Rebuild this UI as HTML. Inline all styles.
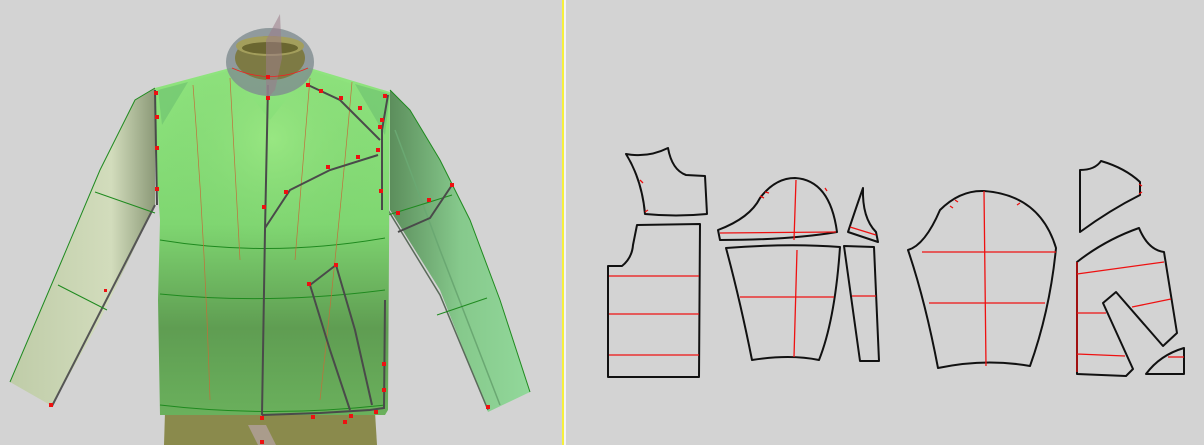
<!DOCTYPE html>
<html><head><style>
html,body{margin:0;padding:0;width:1204px;height:445px;overflow:hidden;background:#d3d3d3}
svg{display:block}
</style></head><body>
<svg width="1204" height="445" viewBox="0 0 1204 445" xmlns="http://www.w3.org/2000/svg">
<defs>
<linearGradient id="body" x1="0" y1="0" x2="0" y2="1">
<stop offset="0" stop-color="#8fe47e"/><stop offset="0.45" stop-color="#7fd671"/><stop offset="0.75" stop-color="#5f9d52"/><stop offset="1" stop-color="#6ab05c"/>
</linearGradient>
<radialGradient id="chest" cx="0.5" cy="0.3" r="0.5">
<stop offset="0" stop-color="#9ae883" stop-opacity="0.9"/><stop offset="1" stop-color="#7ed070" stop-opacity="0"/>
</radialGradient>
<linearGradient id="lsl" x1="0" y1="0" x2="1" y2="0">
<stop offset="0" stop-color="#bfcca8"/><stop offset="0.7" stop-color="#d2dcbc"/><stop offset="1" stop-color="#8c9a78"/>
</linearGradient>
<linearGradient id="rsl" x1="0" y1="0" x2="1" y2="0">
<stop offset="0" stop-color="#5c8e5c"/><stop offset="0.5" stop-color="#86c98c"/><stop offset="1" stop-color="#92d89a"/>
</linearGradient>
</defs>
<rect x="0" y="0" width="562" height="445" fill="#d3d3d3"/>
<!-- pants -->
<path d="M165 412 L375 412 L377 445 L164 445 Z" fill="#8a8a4c"/>
<path d="M248 425 L258 445 L276 445 L266 425 Z" fill="#b8a4a8" opacity="0.7"/>
<!-- left sleeve -->
<path d="M155 88 L135 100 L100 170 L62 260 L10 382 L52 406 L100 320 L155 205 Z" fill="url(#lsl)"/>
<path d="M155 88 L135 100 L100 170 L62 260 L10 382" fill="none" stroke="#1f8a1f" stroke-width="1"/>
<path d="M155 205 L52 406" fill="none" stroke="#555" stroke-width="2"/>
<path d="M95 192 L155 213 M58 285 L107 310" fill="none" stroke="#1f8a1f" stroke-width="1"/>
<!-- right sleeve -->
<path d="M390 90 L410 110 L440 160 L470 220 L500 300 L530 392 L488 412 L440 290 L390 210 Z" fill="url(#rsl)"/>
<path d="M390 90 L410 110 L440 160 L470 220 L500 300 L530 392" fill="none" stroke="#1f8a1f" stroke-width="1"/>
<path d="M388 210 L440 295 L488 410" fill="none" stroke="#5a6a5a" stroke-width="1.5"/>
<path d="M395 130 L440 250 L500 405" fill="none" stroke="#6aa872" stroke-width="1.5"/>
<path d="M388 215 L452 195 M437 315 L487 298" fill="none" stroke="#1f8a1f" stroke-width="1"/>
<!-- body -->
<path d="M155 88 L230 68 L310 68 L390 92 L388 410 L385 415 L160 415 L158 300 L160 220 L155 150 Z" fill="url(#body)"/>
<path d="M160 90 L230 70 L270 120 L310 70 L385 95 L385 300 L270 250 L160 300 Z" fill="url(#chest)"/>
<path d="M158 90 L188 82 L162 125 Z" fill="#6cc070" opacity="0.6"/>
<path d="M390 94 L355 84 L385 135 Z" fill="#6cc070" opacity="0.6"/>
<path d="M160 240 Q270 258 385 238 M160 294 Q270 305 385 290 M160 405 Q270 418 385 405" fill="none" stroke="#1f8a1f" stroke-width="1"/>
<path d="M193 85 Q205 240 210 400 M230 78 L240 260 M352 82 Q340 220 320 400 M310 78 L295 260" fill="none" stroke="#c0703a" stroke-width="0.7"/>
<g fill="none" stroke="#4a4a4a" stroke-width="2">
<path d="M155 90 L157 205"/>
<path d="M268 85 L265 230 L262 415"/>
<path d="M265 228 L290 190 L330 170 L378 155"/>
<path d="M308 85 L340 100 L360 120 L380 140"/>
<path d="M388 95 L382 130 L382 210"/>
<path d="M398 232 L430 218 L452 185"/>
<path d="M310 285 L336 265 L355 330 L372 405"/>
<path d="M310 285 L330 350 L350 410"/>
<path d="M262 415 L320 413 L370 410 L384 408 L385 300"/>
</g>
<!-- collar -->
<ellipse cx="270" cy="62" rx="44" ry="34" fill="#7f8c90" opacity="0.8"/>
<ellipse cx="270" cy="58" rx="35" ry="22" fill="#7d7a44"/>
<ellipse cx="270" cy="46" rx="34" ry="10" fill="#a39e5c"/>
<ellipse cx="270" cy="48" rx="28" ry="6" fill="#6a6630"/>
<path d="M266 40 L280 14 L282 58 L275 90 L266 100 Z" fill="#9b7c88" opacity="0.55"/>
<path d="M232 68 Q270 85 308 68" fill="none" stroke="#e22" stroke-width="0.8"/>
<g fill="#ee1111">
<rect x="154" y="91" width="4" height="4"/><rect x="155" y="115" width="4" height="4"/><rect x="155" y="146" width="4" height="4"/><rect x="155" y="187" width="4" height="4"/>
<rect x="266" y="75" width="4" height="4"/><rect x="266" y="96" width="4" height="4"/><rect x="262" y="205" width="4" height="4"/>
<rect x="306" y="83" width="4" height="4"/><rect x="319" y="89" width="4" height="4"/><rect x="339" y="96" width="4" height="4"/><rect x="358" y="106" width="4" height="4"/>
<rect x="383" y="94" width="4" height="4"/><rect x="380" y="118" width="4" height="4"/><rect x="378" y="125" width="4" height="4"/><rect x="376" y="148" width="4" height="4"/>
<rect x="356" y="155" width="4" height="4"/><rect x="326" y="165" width="4" height="4"/><rect x="284" y="190" width="4" height="4"/>
<rect x="379" y="189" width="4" height="4"/><rect x="450" y="183" width="4" height="4"/><rect x="427" y="198" width="4" height="4"/><rect x="396" y="211" width="4" height="4"/>
<rect x="334" y="263" width="4" height="4"/><rect x="307" y="282" width="4" height="4"/>
<rect x="382" y="362" width="4" height="4"/><rect x="382" y="388" width="4" height="4"/><rect x="374" y="410" width="4" height="4"/><rect x="349" y="414" width="4" height="4"/><rect x="311" y="415" width="4" height="4"/><rect x="260" y="416" width="4" height="4"/><rect x="260" y="440" width="4" height="4"/><rect x="343" y="420" width="4" height="4"/>
<rect x="49" y="403" width="4" height="4"/><rect x="486" y="405" width="4" height="4"/><rect x="104" y="289" width="3" height="3"/>
</g>
<rect x="562" y="0" width="2" height="445" fill="#f6f03a"/>
<rect x="564" y="0" width="2" height="445" fill="#f4f4f4"/>
<g fill="none" stroke="#111" stroke-width="2" stroke-linejoin="round">
<path d="M626 154 Q648 158 668 148 Q672 170 686 175 L705 176 L707 214 Q676 217 645 214 Q642 180 626 154 Z"/>
<path d="M637 225 L700 224 L699 377 L608 377 L608 266 L622 266 Q632 258 633 245 Z"/>
<path d="M718 230 Q750 218 760 198 Q775 178 795 178 Q830 180 837 232 Q790 240 720 240 Z"/>
<path d="M726 248 Q790 243 840 247 Q835 320 819 360 Q790 354 752 360 Q740 300 726 248 Z"/>
<path d="M863 188 Q857 205 848 232 L878 242 L876 232 Q862 218 863 188 Z"/>
<path d="M844 246 L874 247 L879 361 L860 361 Z"/>
<path d="M908 250 Q925 245 940 210 Q960 190 984 191 Q1040 195 1056 248 Q1050 310 1030 366 Q985 358 938 368 Q925 300 908 250 Z"/>
<path d="M1080 170 Q1095 170 1101 161 Q1125 168 1140 182 L1140 195 Q1110 210 1080 232 Z"/>
<path d="M1077 262 Q1105 240 1139 228 Q1148 250 1164 252 L1177 333 L1163 346 L1116 292 L1103 303 L1133 369 L1126 376 L1077 374 Z"/>
<path d="M1146 374 Q1160 355 1184 348 L1184 374 Z"/>
</g>
<g fill="none" stroke="#ee1111" stroke-width="1.3">
<path d="M609 276 L699 276 M609 314 L699 314 M609 355 L699 355"/>
<path d="M796 180 L794 240 M720 233 L836 232"/>
<path d="M797 250 L794 357 M740 297 L834 297"/>
<path d="M850 227 L876 235 M852 296 L876 296"/>
<path d="M984 191 L986 366 M922 252 L1056 252 M929 303 L1045 303"/>
<path d="M1077 274 L1164 262 M1132 307 L1171 299 M1077 313 L1106 313 M1077 354 L1125 356 M1077 262 L1077 372"/>
<path d="M1168 357 L1184 357"/>
<path d="M640 180 L643 183 M645 212 L648 210 M760 196 L764 198 M765 192 L769 193 M825 188 L827 191 M950 206 L953 208 M955 200 L958 202 M1017 205 L1020 203 M1139 184 L1142 186 M1139 194 L1142 192"/>
</g>
</svg>
</body></html>
